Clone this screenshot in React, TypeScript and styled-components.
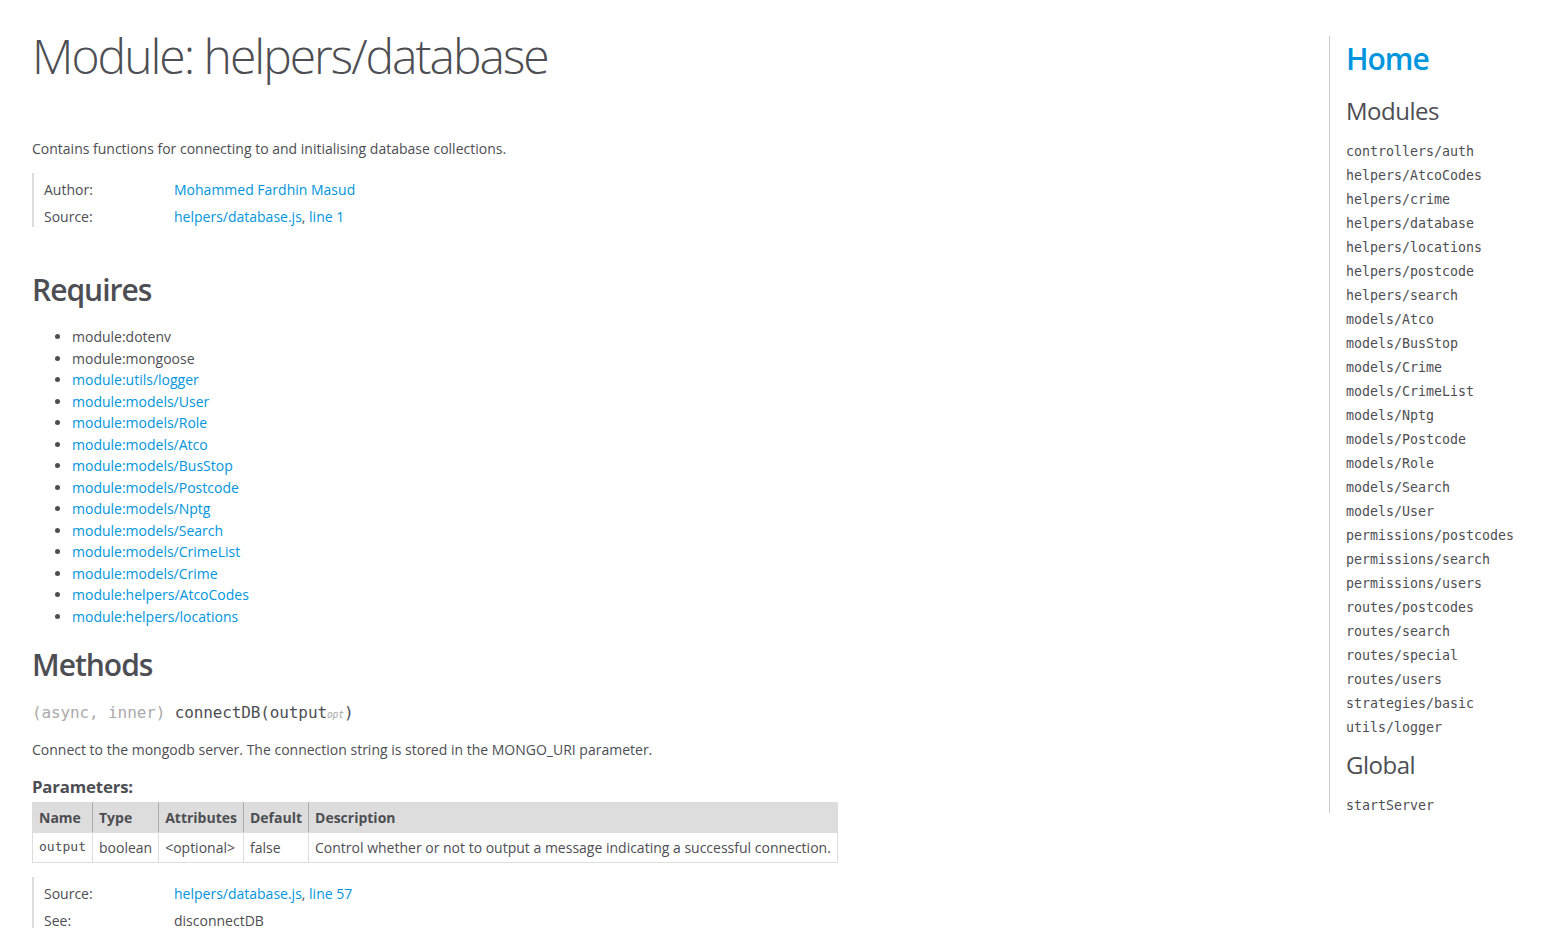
import React from "react";
import styled, { createGlobalStyle } from "styled-components";

const GlobalStyle = createGlobalStyle`
  * { box-sizing: border-box; }
  html { background: #fff; font-size: 14px; }
  body {
    margin: 8px;
    font-family: "Open Sans", "Liberation Sans", sans-serif;
    font-size: 14px;
    line-height: 1.5;
    color: #4d4e53;
    background: #fff;
  }
`;

const mono = `"DejaVu Sans Mono", "Liberation Mono", monospace`;

const Page = styled.div`
  display: flex;
  align-items: flex-start;
`;

const Main = styled.div`
  flex: 1;
  min-width: 0;
`;

const PageTitle = styled.h1`
  font-family: "Open Sans", sans-serif;
  font-weight: 300;
  font-size: 48px;
  letter-spacing: -2px;
  line-height: 72px;
  margin: 12px 24px 20px;
  color: #4d4e53;
`;

const Section = styled.section`
  display: block;
  background: #fff;
  padding: 12px 24px;
  margin-right: 30px;
`;

const Link = styled.a`
  color: #0095dd;
  text-decoration: none;
  &:hover { text-decoration: underline; }
`;

const Description = styled.div<{ $top?: number }>`
  margin: ${(p) => p.$top ?? 14}px 0 14px;
`;

const Details = styled.dl<{ $gap?: number }>`
  display: grid;
  grid-template-columns: 140px 1fr;
  margin: 14px 0 ${(p) => p.$gap ?? 40}px;
  border-left: 2px solid #ddd;
`;

const Term = styled.dt`
  padding: 6px 0 0 10px;
`;

const Value = styled.dd`
  margin: 0;
  padding-top: 6px;
`;

const SubsectionTitle = styled.h3`
  font-family: "Open Sans", sans-serif;
  font-size: 30px;
  font-weight: 600;
  letter-spacing: -1px;
  line-height: 45px;
  margin: 0 0 12px;
`;

const RequiresList = styled.ul`
  margin: 14px 0 15px;
  padding-left: 40px;
  list-style: disc;
`;

const RequiresItem = styled.li`
  line-height: 21.5px;
`;

const Signature = styled.h4`
  font-family: ${mono};
  font-size: 16px;
  font-weight: 400;
  letter-spacing: -0.12px;
  line-height: 27px;
  height: 27px;
  margin: 0 0 12px;
  color: #4d4e53;
`;

const TypeSignature = styled.span`
  color: #aaa;
`;

const SignatureAttrs = styled.span`
  font-size: 60%;
  line-height: 0;
  color: #aaa;
  font-style: italic;
  font-weight: lighter;
`;

const ParamsTitle = styled.h5`
  font-family: "Open Sans", sans-serif;
  font-size: 16.8px;
  font-weight: 700;
  letter-spacing: -0.01em;
  line-height: 25px;
  margin: 8px 0 3px;
`;

const Table = styled.table`
  border-spacing: 0;
  border: 0;
  border-collapse: collapse;
`;

const HeadRow = styled.tr`
  background: #ddd;
  font-weight: bold;
`;

const Th = styled.th`
  border: 1px solid #ddd;
  border-right: 1px solid #aaa;
  text-align: left;
  vertical-align: top;
  padding: 4px 6px;
  font-weight: 700;
  &:last-child { border-right: 1px solid #ddd; }
`;

const Td = styled.td<{ $mono?: boolean }>`
  border: 1px solid #ddd;
  text-align: left;
  vertical-align: top;
  padding: 4px 6px;
  ${(p) => (p.$mono ? `font-family: ${mono}; font-size: 13px;` : "")}
`;

const Nav = styled.nav`
  width: 216px;
  flex: none;
  margin-top: 28px;
  border-left: 1px solid #ccc;
  padding-left: 16px;
`;

const NavHome = styled.h2`
  font-family: "Open Sans", sans-serif;
  font-size: 30px;
  font-weight: 600;
  letter-spacing: -1px;
  line-height: 45px;
  margin: 0 0 12px;
`;

const NavHeading = styled.h3`
  font-family: "Open Sans", sans-serif;
  font-size: 24px;
  font-weight: 400;
  letter-spacing: -0.5px;
  line-height: 36px;
  margin: 12px 0 12px;
  color: #4d4e53;
`;

const NavList = styled.ul`
  padding: 0;
  margin: 0;
  list-style: none;
`;

const NavItem = styled.li`
  margin-top: 6px;
  font-family: ${mono};
  font-size: 13.3px;
  line-height: 22px;
  height: 18px;
`;

const NavLink = styled.a`
  color: #4d4e53;
  text-decoration: none;
`;

const requires: { name: string; link: boolean }[] = [
  { name: "module:dotenv", link: false },
  { name: "module:mongoose", link: false },
  { name: "module:utils/logger", link: true },
  { name: "module:models/User", link: true },
  { name: "module:models/Role", link: true },
  { name: "module:models/Atco", link: true },
  { name: "module:models/BusStop", link: true },
  { name: "module:models/Postcode", link: true },
  { name: "module:models/Nptg", link: true },
  { name: "module:models/Search", link: true },
  { name: "module:models/CrimeList", link: true },
  { name: "module:models/Crime", link: true },
  { name: "module:helpers/AtcoCodes", link: true },
  { name: "module:helpers/locations", link: true },
];

const modules = [
  "controllers/auth",
  "helpers/AtcoCodes",
  "helpers/crime",
  "helpers/database",
  "helpers/locations",
  "helpers/postcode",
  "helpers/search",
  "models/Atco",
  "models/BusStop",
  "models/Crime",
  "models/CrimeList",
  "models/Nptg",
  "models/Postcode",
  "models/Role",
  "models/Search",
  "models/User",
  "permissions/postcodes",
  "permissions/search",
  "permissions/users",
  "routes/postcodes",
  "routes/search",
  "routes/special",
  "routes/users",
  "strategies/basic",
  "utils/logger",
];

export default function App() {
  return (
    <>
      <GlobalStyle />
      <Page>
        <Main>
          <PageTitle>Module: helpers/database</PageTitle>
          <Section>
            <header>
              <Description>
                Contains functions for connecting to and initialising database collections.
              </Description>
              <Details>
                <Term>Author:</Term>
                <Value>
                  <Link href="#">Mohammed Fardhin Masud</Link>
                </Value>
                <Term>Source:</Term>
                <Value>
                  <Link href="#">helpers/database.js</Link>, <Link href="#">line 1</Link>
                </Value>
              </Details>
            </header>
            <article>
              <SubsectionTitle>Requires</SubsectionTitle>
              <RequiresList>
                {requires.map((r) => (
                  <RequiresItem key={r.name}>
                    {r.link ? <Link href="#">{r.name}</Link> : r.name}
                  </RequiresItem>
                ))}
              </RequiresList>

              <SubsectionTitle>Methods</SubsectionTitle>
              <Signature>
                <TypeSignature>(async, inner) </TypeSignature>
                connectDB(output<SignatureAttrs>opt</SignatureAttrs>)
              </Signature>
              <Description $top={13}>
                Connect to the mongodb server. The connection string is stored in the MONGO_URI
                parameter.
              </Description>
              <ParamsTitle>Parameters:</ParamsTitle>
              <Table>
                <thead>
                  <HeadRow>
                    <Th>Name</Th>
                    <Th>Type</Th>
                    <Th>Attributes</Th>
                    <Th>Default</Th>
                    <Th>Description</Th>
                  </HeadRow>
                </thead>
                <tbody>
                  <tr>
                    <Td $mono>output</Td>
                    <Td>boolean</Td>
                    <Td>&lt;optional&gt;</Td>
                    <Td>false</Td>
                    <Td>
                      Control whether or not to output a message indicating a successful connection.
                    </Td>
                  </tr>
                </tbody>
              </Table>
              <Details>
                <Term>Source:</Term>
                <Value>
                  <Link href="#">helpers/database.js</Link>, <Link href="#">line 57</Link>
                </Value>
                <Term>See:</Term>
                <Value>disconnectDB</Value>
              </Details>
            </article>
          </Section>
        </Main>
        <Nav>
          <NavHome>
            <Link href="#">Home</Link>
          </NavHome>
          <NavHeading>Modules</NavHeading>
          <NavList>
            {modules.map((m) => (
              <NavItem key={m}>
                <NavLink href="#">{m}</NavLink>
              </NavItem>
            ))}
          </NavList>
          <NavHeading>Global</NavHeading>
          <NavList>
            <NavItem>
              <NavLink href="#">startServer</NavLink>
            </NavItem>
          </NavList>
        </Nav>
      </Page>
    </>
  );
}
